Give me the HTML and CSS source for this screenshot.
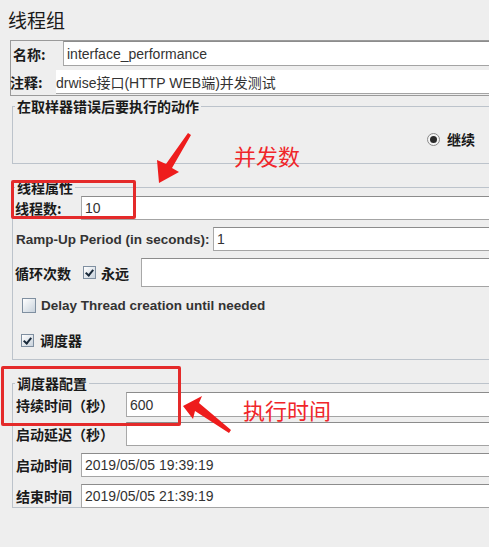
FILE: index.html
```html
<!DOCTYPE html>
<html>
<head>
<title>线程组</title>
<link rel="stylesheet" href="styles.css">
</head>
<body>
<div class="page">
<h1 class="title">线程组</h1>

<div class="name-panel">
<div class="row name-row">
<span class="label">名称:</span>
<input type="text" class="field" value="interface_performance">
</div>
<div class="row comment-row">
<span class="label">注释:</span>
<input type="text" class="field plain" value="drwise接口(HTTP WEB端)并发测试">
</div>
</div>

<fieldset class="group on-error">
<legend>在取样器错误后要执行的动作</legend>
<div class="radio-row">
<span class="radio"><span class="dot"></span></span>
<span class="label">继续</span>
</div>
</fieldset>

<fieldset class="group thread-props">
<legend>线程属性</legend>
<div class="row threads-row">
<span class="label">线程数:</span>
<input type="text" class="field" value="10">
</div>
<div class="row ramp-row">
<span class="label latin">Ramp-Up Period (in seconds):</span>
<input type="text" class="field" value="1">
</div>
<div class="row loop-row">
<span class="label">循环次数</span>
<span class="check checked"></span>
<span class="label forever">永远</span>
<input type="text" class="field" value="">
</div>
<div class="check-row delay-row">
<span class="check"></span>
<span class="label latin">Delay Thread creation until needed</span>
</div>
<div class="check-row sched-row">
<span class="check checked"></span>
<span class="label">调度器</span>
</div>
</fieldset>

<fieldset class="group scheduler">
<legend>调度器配置</legend>
<div class="row duration-row">
<span class="label">持续时间（秒）</span>
<input type="text" class="field" value="600">
</div>
<div class="row delay-time-row">
<span class="label">启动延迟（秒）</span>
<input type="text" class="field" value="">
</div>
<div class="row start-row">
<span class="label">启动时间</span>
<input type="text" class="field" value="2019/05/05 19:39:19">
</div>
<div class="row end-row">
<span class="label">结束时间</span>
<input type="text" class="field" value="2019/05/05 21:39:19">
</div>
</fieldset>

<!-- annotations drawn over the screenshot -->
<div class="mark mark-threads"></div>
<div class="mark mark-duration"></div>
<span class="note note-threads">并发数</span>
<span class="note note-duration">执行时间</span>
<svg class="arrows" width="489" height="547" viewBox="0 0 489 547">
<polygon points="159,183 157,160 166,164 188,133 191,135 172,168 179,172" fill="#ee1c1c"/>
<polygon points="183,406 202,396 199,403 231,430 229,433 195,411 193,419" fill="#ee1c1c"/>
</svg>
</div>
</body>
</html>
```

FILE: styles.css
```css
body {
	margin: 0;
	background-color: #eeeeee;
	font-family: "Liberation Sans", "Noto Sans CJK SC", sans-serif;
	color: #1a1a1a;
	overflow: hidden;
}

.page {
	position: relative;
	width: 489px;
	height: 547px;
	overflow: hidden;
}

.title {
	margin: 0;
	padding: 7px 0 0 8px;
	height: 33px;
	box-sizing: border-box;
	font-family: "Noto Sans CJK SC", sans-serif;
	font-size: 19px;
	font-weight: normal;
	line-height: 26px;
}

.label {
	font-family: "Noto Sans CJK SC", sans-serif;
	font-size: 14px;
	font-weight: bold;
	white-space: nowrap;
	color: #1a1a1a;
}

.label.latin {
	font-family: "Liberation Sans", sans-serif;
	font-size: 13.5px;
	color: #333;
}

.row {
	display: flex;
	align-items: center;
}

.field {
	flex: 1;
	min-width: 0;
	height: 100%;
	box-sizing: border-box;
	margin: 0;
	padding: 0 0 0 3px;
	background-color: #ffffff;
	border: none;
	border-top: 1px solid #8c8c8c;
	border-bottom: 1px solid #a4a4a4;
	border-left: 1px solid #a8a8a8;
	font-family: "Liberation Sans", "Noto Sans CJK SC", sans-serif;
	font-size: 14px;
	color: #333;
	outline: none;
}

.field.plain {
	border-top: none;
	border-left: none;
	padding-left: 0;
}

/* name / comment block */
.name-panel {
	margin-left: 10px;
	margin-top: 7px;
	height: 56px;
	border: 1px solid #9a9a9a;
	border-right: none;
	box-sizing: border-box;
}

.name-row {
	height: 25px;
	padding-left: 2px;
}

.name-row .label {
	width: 50px;
}

.comment-row {
	height: 24px;
	margin-top: 4px;
}

.comment-row .label {
	width: 46px;
	margin-left: -1px;
}

/* titled groups */
.group {
	margin: 0 0 0 12px;
	padding: 0;
	border: 1px solid #bcc3cb;
	border-right: none;
	min-width: 0;
}

.group legend {
	margin-left: 2px;
	padding: 0 2px;
	font-family: "Noto Sans CJK SC", sans-serif;
	font-size: 14px;
	font-weight: bold;
	line-height: 18px;
}

.on-error {
	margin-top: 1px;
	height: 67px;
	box-sizing: border-box;
}

.radio-row {
	display: flex;
	align-items: center;
	justify-content: flex-end;
	padding-right: 14px;
	margin-top: 14px;
}

.radio {
	width: 11px;
	height: 11px;
	border: 1px solid #8a8a8a;
	border-radius: 50%;
	background-color: #f4f4f4;
	display: flex;
	align-items: center;
	justify-content: center;
	margin-right: 7px;
}

.radio .dot {
	width: 7px;
	height: 7px;
	border-radius: 50%;
	background-color: #2a2a2a;
}

.thread-props {
	margin-top: 14px;
	height: 182px;
	box-sizing: border-box;
}

.threads-row {
	height: 24px;
	margin-top: 0;
	padding-left: 2px;
}

.threads-row .label {
	width: 66px;
}

.ramp-row {
	height: 24px;
	margin-top: 7px;
	padding-left: 3px;
}

.ramp-row .label {
	width: 197px;
}

.loop-row {
	height: 29px;
	margin-top: 7px;
	padding-left: 2px;
}

.loop-row .forever {
	width: 40px;
	margin-left: 5px;
}

.check {
	display: inline-block;
	position: relative;
	width: 13px;
	height: 13px;
	box-sizing: border-box;
	border: 1px solid #7f8fa0;
	background: linear-gradient(135deg, #ffffff, #c8d2dc);
}

.loop-row .check {
	margin-left: 12px;
}

.check.checked::after {
	content: "";
	position: absolute;
	left: 3px;
	top: 1px;
	width: 3px;
	height: 6px;
	border: solid #1a2a3a;
	border-width: 0 2px 2px 0;
	transform: rotate(40deg);
}

.check-row {
	display: flex;
	align-items: center;
}

.check-row .check {
	margin-right: 6px;
}

.delay-row {
	margin-top: 11px;
	padding-left: 9px;
}

.delay-row .check {
	width: 14px;
	height: 15px;
	margin-right: 5px;
}

.sched-row {
	margin-top: 17px;
	padding-left: 8px;
}

.scheduler {
	margin-top: 14px;
	height: 134px;
	box-sizing: border-box;
}

.scheduler .row {
	padding-left: 3px;
}

.duration-row {
	height: 25px;
	margin-top: 0;
}

.duration-row .label,
.delay-time-row .label {
	width: 110px;
}

.delay-time-row {
	height: 24px;
	margin-top: 5px;
}

.start-row {
	height: 24px;
	margin-top: 7px;
}

.end-row {
	height: 24px;
	margin-top: 7px;
}

.start-row .label,
.end-row .label {
	width: 65px;
}

/* red annotations */
.mark {
	position: absolute;
	border: 3px solid #e42a2a;
	border-radius: 2px;
	box-sizing: border-box;
}

.mark-threads {
	left: 11px;
	top: 180px;
	width: 125px;
	height: 39px;
}

.mark-duration {
	left: 1px;
	top: 366px;
	width: 180px;
	height: 60px;
}

.note {
	position: absolute;
	font-family: "Noto Sans CJK SC", sans-serif;
	font-size: 22px;
	line-height: 24px;
	color: #f0262a;
}

.note-threads {
	left: 234px;
	top: 143px;
}

.note-duration {
	left: 243px;
	top: 397px;
}

.arrows {
	position: absolute;
	left: 0;
	top: 0;
	pointer-events: none;
}
```
